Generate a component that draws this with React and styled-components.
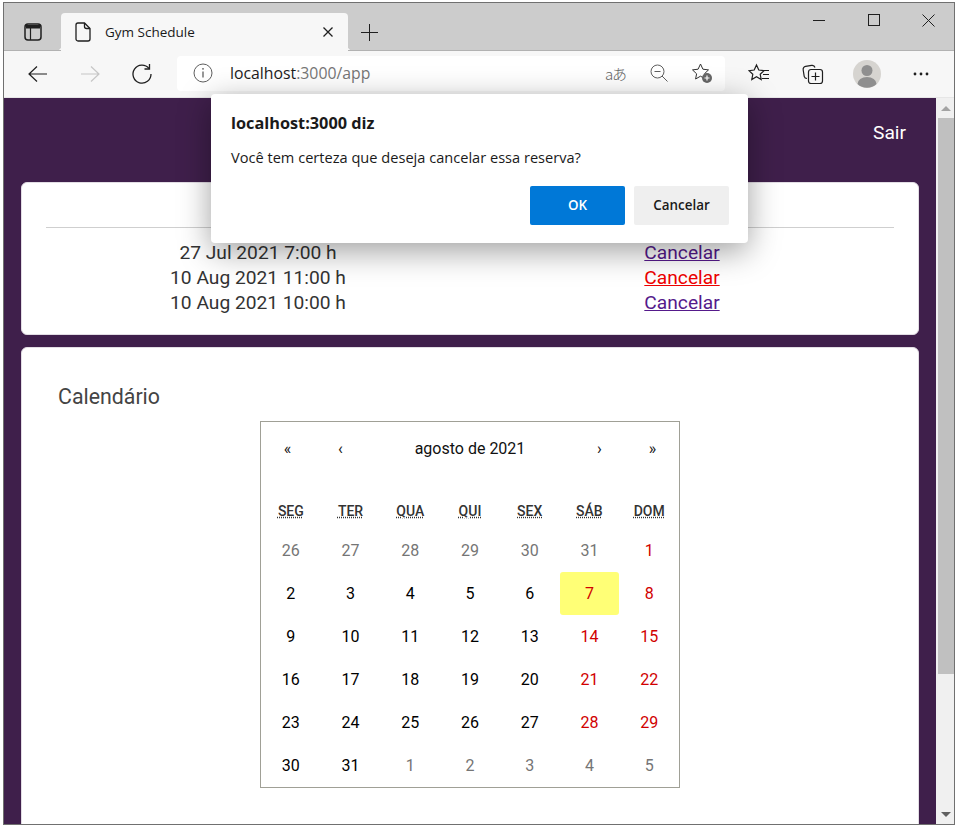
import styled, { createGlobalStyle } from "styled-components";

const GlobalStyle = createGlobalStyle`
  html, body {
    margin: 0;
    padding: 0;
    background: #fff;
    overflow: hidden;
  }
  * {
    box-sizing: border-box;
  }
`;

const UI_FONT = `"Open Sans", "Noto Sans", "Liberation Sans", sans-serif`;
const PAGE_FONT = `Roboto, "Liberation Sans", sans-serif`;

const Window = styled.div`
  position: relative;
  display: flex;
  flex-direction: column;
  width: 952px;
  height: 823px;
  margin: 2px 0 0 3px;
  border: 1px solid #707070;
  overflow: hidden;
  font-family: ${UI_FONT};
`;

const TabStrip = styled.div`
  display: flex;
  align-items: flex-start;
  flex: none;
  height: 48px;
  background: #cccccc;
  box-shadow: inset 0 -1px 0 #b2b2b2;
`;

const SideButton = styled.div`
  display: flex;
  align-items: center;
  justify-content: center;
  width: 57px;
  height: 38px;
  margin-top: 10px;
`;

const Tab = styled.div`
  position: relative;
  display: flex;
  align-items: center;
  width: 287px;
  height: 38px;
  margin-top: 10px;
  padding: 0 14px 0 14px;
  background: #f7f7f7;
  border-radius: 4px 4px 0 0;
  color: #1a1a1a;

  &::before,
  &::after {
    content: "";
    position: absolute;
    bottom: 1px;
    width: 4px;
    height: 4px;
  }
  &::before {
    left: -4px;
    background: radial-gradient(circle at 0 0, transparent 4px, #f7f7f7 4.5px);
  }
  &::after {
    right: -4px;
    background: radial-gradient(circle at 100% 0, transparent 4px, #f7f7f7 4.5px);
  }
`;

const TabTitle = styled.span`
  flex: 1;
  margin-left: 14px;
  font-size: 13.5px;
  line-height: 16px;
`;

const PlusButton = styled.div`
  display: flex;
  align-items: center;
  justify-content: center;
  width: 42px;
  height: 38px;
  margin-top: 10px;
`;

const Spacer = styled.div`
  flex: 1;
`;

const WinControls = styled.div`
  display: flex;
  margin-right: -2px;
`;

const WinButton = styled.div`
  display: flex;
  align-items: center;
  justify-content: center;
  width: 55px;
  height: 34px;
`;

const Toolbar = styled.div`
  display: flex;
  align-items: center;
  flex: none;
  height: 47px;
  padding: 0 0 0 8px;
  background: #f7f7f7;
  border-bottom: 1px solid #e6e6e6;
`;

const NavButton = styled.div`
  display: flex;
  align-items: center;
  justify-content: center;
  width: 52px;
  height: 35px;
`;

const AddressBar = styled.div`
  display: flex;
  align-items: center;
  width: 548px;
  height: 35px;
  margin: 0 7px 2px 9px;
  padding: 0 2px 0 16px;
  background: #fff;
  border-radius: 4px;
`;

const AddressText = styled.div`
  flex: 1;
  margin-left: 17px;
  font-size: 15.8px;
  color: #1c1c1c;

  span {
    color: #767676;
  }
`;

const AddressIcon = styled.div`
  display: flex;
  align-items: center;
  justify-content: center;
  width: 43px;
  height: 35px;
`;

const TranslateGlyph = styled.span`
  font-family: "Noto Sans CJK JP", sans-serif;
  font-size: 15px;
  font-weight: 300;
  letter-spacing: -1px;
  color: #666;
`;

const ToolIcon = styled.div`
  display: flex;
  align-items: center;
  justify-content: center;
  width: 54px;
  height: 35px;
`;

const Viewport = styled.div`
  display: flex;
  flex: 1;
  min-height: 0;
`;

const Page = styled.main`
  flex: 1;
  min-width: 0;
  padding: 0 17px;
  overflow: hidden;
  background: #3f1f4b;
  font-family: ${PAGE_FONT};
`;

const Header = styled.header`
  display: flex;
  align-items: center;
  justify-content: flex-end;
  height: 84px;
  padding: 0 13px 15px 0;
  color: #fff;
  font-size: 19.2px;
`;

const Card = styled.section`
  background: #fff;
  border-radius: 6px;
  border: 1px solid #e2dde4;
`;

const ReservationsCard = styled(Card)`
  height: 153px;
  margin-bottom: 12px;
  padding: 44px 24px 0;
`;

const Divider = styled.hr`
  height: 1px;
  margin: 0 0 12px;
  border: 0;
  background: #cfcfcf;
`;

const ReservationRow = styled.div`
  display: grid;
  grid-template-columns: 1fr 1fr;
  height: 25px;
  font-size: 19.2px;
  line-height: 25px;
  text-align: center;
  color: #333;
`;

const CancelLink = styled.a`
  color: ${(p) => (p.$active ? "#ee0000" : "#551a8b")};
  text-decoration: underline;
`;

const CalendarCard = styled(Card)`
  height: 600px;
  padding: 35px 36px 0;
`;

const CardTitle = styled.h2`
  margin: 0 0 10px;
  font-size: 21.33px;
  font-weight: 400;
  line-height: 28px;
  color: #444;
`;

const Calendar = styled.div`
  width: 420px;
  margin: 0 auto;
  border: 1px solid #a0a096;
  background: #fff;
`;

const CalendarNav = styled.div`
  display: flex;
  align-items: center;
  height: 54px;
  padding-bottom: 2px;
  color: #111;
`;

const NavArrow = styled.span`
  width: 53px;
  text-align: center;
  font-size: 16px;
`;

const NavLabel = styled.span`
  flex: 1;
  text-align: center;
  font-size: 16px;
`;

const Weekdays = styled.div`
  display: grid;
  grid-template-columns: repeat(7, 1fr);
  height: 53px;
  padding-top: 27px;
  text-align: center;
  font-size: 14px;
  font-weight: 500;
  line-height: 16px;
`;

const Weekday = styled.abbr`
  color: #333;
  text-decoration: underline dotted;
`;

const Days = styled.div`
  display: grid;
  grid-template-columns: repeat(7, 1fr);
  grid-auto-rows: 43px;
`;

const dayColors = {
  normal: "#000",
  weekend: "#d10000",
  outside: "#757575",
};

const Day = styled.div`
  display: flex;
  align-items: center;
  justify-content: center;
  font-size: 16px;
  border-radius: 3px;
  color: ${(p) => dayColors[p.$kind]};
  background: ${(p) => (p.$today ? "#ffff76" : "transparent")};
`;

const Scrollbar = styled.div`
  display: flex;
  flex-direction: column;
  flex: none;
  width: 18px;
  background: #f0f0f0;
`;

const ScrollArrow = styled.div`
  display: flex;
  align-items: center;
  justify-content: center;
  flex: none;
  height: ${(p) => (p.$down ? "19px" : "20px")};
  padding-left: 2px;

  &::before {
    content: "";
    border-left: 5px solid transparent;
    border-right: 5px solid transparent;
    ${(p) =>
      p.$down
        ? "border-top: 5px solid #606060;"
        : "border-bottom: 5px solid #a3a3a3;"}
  }
`;

const ScrollTrack = styled.div`
  flex: 1;
  padding-left: 2px;
`;

const ScrollThumb = styled.div`
  height: 556px;
  background: #c0c0c0;
`;

const Dialog = styled.div`
  position: absolute;
  top: 91px;
  left: 207px;
  display: flex;
  flex-direction: column;
  width: 537px;
  height: 149px;
  padding: 19px 19px 18px 20px;
  background: #fff;
  border-radius: 4px;
  box-shadow: 0 8px 32px rgba(0, 0, 0, 0.38);
  color: #1a1a1a;
`;

const DialogTitle = styled.div`
  font-size: 16.3px;
  font-weight: 700;
  line-height: 20px;
`;

const DialogMessage = styled.div`
  margin-top: 14px;
  font-size: 14.6px;
  line-height: 20px;
`;

const DialogActions = styled.div`
  display: flex;
  justify-content: flex-end;
  gap: 9px;
  margin-top: auto;
`;

const DialogButton = styled.button`
  width: 95px;
  height: 39px;
  padding: 0 0 2px;
  border: 0;
  border-radius: 2px;
  font-family: ${UI_FONT};
  font-size: 13.4px;
  font-weight: 600;
  background: ${(p) => (p.$primary ? "#0078d7" : "#efefef")};
  color: ${(p) => (p.$primary ? "#fff" : "#1a1a1a")};
`;

const Icon = ({ size = 20, w, h, children, stroke = "#1f1f1f" }) => (
  <svg
    width={w || size}
    height={h || size}
    viewBox={`0 0 ${w || size} ${h || size}`}
    fill="none"
    stroke={stroke}
    strokeWidth="1"
  >
    {children}
  </svg>
);

const reservations = [
  { date: "27 Jul 2021 7:00 h" },
  { date: "10 Aug 2021 11:00 h", active: true },
  { date: "10 Aug 2021 10:00 h" },
];

const weekdays = [
  ["SEG", "segunda-feira"],
  ["TER", "terça-feira"],
  ["QUA", "quarta-feira"],
  ["QUI", "quinta-feira"],
  ["SEX", "sexta-feira"],
  ["SÁB", "sábado"],
  ["DOM", "domingo"],
];

const buildDays = () => {
  const days = [];
  for (let d = 26; d <= 31; d++) days.push({ n: d, kind: "outside" });
  for (let d = 1; d <= 31; d++) {
    const col = days.length % 7;
    days.push({ n: d, kind: col >= 5 ? "weekend" : "normal", today: d === 7 });
  }
  for (let d = 1; d <= 5; d++) days.push({ n: d, kind: "outside" });
  return days;
};

const App = () => {
  return (
    <>
      <GlobalStyle />
      <Window>
        <TabStrip>
          <SideButton>
            <Icon size={18}>
              <rect x="1" y="1" width="16" height="16" rx="3" strokeWidth="1.5" />
              <path d="M2 2h14v3.5H2z" fill="#1f1f1f" stroke="none" />
              <path d="M6.5 5v12" strokeWidth="1.2" />
            </Icon>
          </SideButton>
          <Tab>
            <Icon w={16} h={20}>
              <path d="M1 3a2 2 0 0 1 2-2h6.5L15 6.5V17a2 2 0 0 1-2 2H3a2 2 0 0 1-2-2z" strokeWidth="1.3" />
              <path d="M9.5 1v3.5a2 2 0 0 0 2 2H15" strokeWidth="1.3" />
            </Icon>
            <TabTitle>Gym Schedule</TabTitle>
            <Icon size={12}>
              <path d="M1.5 1.5l9 9M10.5 1.5l-9 9" strokeWidth="1.3" />
            </Icon>
          </Tab>
          <PlusButton>
            <Icon size={17}>
              <path d="M8.5 0v17M0 8.5h17" />
            </Icon>
          </PlusButton>
          <Spacer />
          <WinControls>
            <WinButton>
              <Icon w={12} h={12}>
                <path d="M0 6.5h12" />
              </Icon>
            </WinButton>
            <WinButton>
              <Icon w={12} h={12}>
                <rect x="0.5" y="0.5" width="11" height="11" />
              </Icon>
            </WinButton>
            <WinButton>
              <Icon w={13} h={13}>
                <path d="M0.5 0.5l12 12M12.5 0.5l-12 12" />
              </Icon>
            </WinButton>
          </WinControls>
        </TabStrip>
        <Toolbar>
          <NavButton>
            <Icon w={22} h={18}>
              <path d="M20 9H2M10 1.5L2 9l8 7.5" strokeWidth="1.2" />
            </Icon>
          </NavButton>
          <NavButton>
            <Icon w={22} h={18} stroke="#c6c6c6">
              <path d="M2 9h18M12 1.5L20 9l-8 7.5" strokeWidth="1.2" />
            </Icon>
          </NavButton>
          <NavButton>
            <Icon size={22}>
              <path d="M18 5.5A9 9 0 1 0 20 11" strokeWidth="1.3" />
              <path d="M18.5 1v5h-5" strokeWidth="1.3" />
            </Icon>
          </NavButton>
          <AddressBar>
            <Icon size={20} stroke="#5f5f5f">
              <circle cx="10" cy="10" r="9" />
              <path d="M10 8.5v6" strokeWidth="1.3" />
              <circle cx="10" cy="5.8" r="0.9" fill="#5f5f5f" stroke="none" />
            </Icon>
            <AddressText>
              localhost<span>:3000/app</span>
            </AddressText>
            <AddressIcon>
              <TranslateGlyph>aあ</TranslateGlyph>
            </AddressIcon>
            <AddressIcon>
              <Icon size={18} stroke="#5f5f5f">
                <circle cx="7.5" cy="7.5" r="6.5" />
                <path d="M4.5 7.5h6M12 12l5.5 5.5" />
              </Icon>
            </AddressIcon>
            <AddressIcon>
              <Icon size={22} stroke="#333">
                <path d="M9.5 2l2.4 5.2 5.6.7-4.1 3.9 1 5.2-4.9-2.8-4.9 2.8 1-5.2L1.5 7.9l5.6-.7z" />
                <circle cx="16" cy="16" r="5" fill="#666" stroke="none" />
                <path d="M16 13.5v5M13.5 16h5" stroke="#fff" strokeWidth="1.2" />
              </Icon>
            </AddressIcon>
          </AddressBar>
          <ToolIcon>
            <Icon size={22}>
              <path d="M8.5 2l2.3 5 5.2.7-3.8 3.6 1 5.2-4.7-2.7-4.7 2.7 1-5.2L1 7.7 6.2 7z" strokeWidth="1.2" />
              <path d="M14 7.5h7M15 11.5h6M14 15.5h7" strokeWidth="1.2" />
            </Icon>
          </ToolIcon>
          <ToolIcon>
            <Icon size={22}>
              <path d="M5 15.5a3 3 0 0 1-2.8-2.2L1.2 7A3 3 0 0 1 3.6 3.4l6-1a3 3 0 0 1 3.4 2.1" strokeWidth="1.2" />
              <rect x="6.5" y="6.5" width="14" height="14" rx="2.5" strokeWidth="1.2" />
              <path d="M13.5 9.5v8M9.5 13.5h8" strokeWidth="1.2" />
            </Icon>
          </ToolIcon>
          <ToolIcon>
            <svg width="28" height="28" viewBox="0 0 28 28">
              <circle cx="14" cy="14" r="14" fill="#d6d4d0" />
              <circle cx="14" cy="10.5" r="5.5" fill="#8f8f8f" />
              <path d="M4.5 24a9.5 7 0 0 1 19 0 14 14 0 0 1-19 0z" fill="#8f8f8f" />
            </svg>
          </ToolIcon>
          <ToolIcon>
            <svg width="16" height="4" viewBox="0 0 16 4" fill="#1f1f1f">
              <circle cx="2" cy="2" r="1.4" />
              <circle cx="8" cy="2" r="1.4" />
              <circle cx="14" cy="2" r="1.4" />
            </svg>
          </ToolIcon>
        </Toolbar>
        <Viewport>
          <Page>
            <Header>Sair</Header>
            <ReservationsCard>
              <Divider />
              {reservations.map((r) => (
                <ReservationRow key={r.date}>
                  <span>{r.date}</span>
                  <span>
                    <CancelLink href="#" $active={r.active}>
                      Cancelar
                    </CancelLink>
                  </span>
                </ReservationRow>
              ))}
            </ReservationsCard>
            <CalendarCard>
              <CardTitle>Calendário</CardTitle>
              <Calendar>
                <CalendarNav>
                  <NavArrow>«</NavArrow>
                  <NavArrow>‹</NavArrow>
                  <NavLabel>agosto de 2021</NavLabel>
                  <NavArrow>›</NavArrow>
                  <NavArrow>»</NavArrow>
                </CalendarNav>
                <Weekdays>
                  {weekdays.map(([short, full]) => (
                    <div key={short}>
                      <Weekday title={full}>{short}</Weekday>
                    </div>
                  ))}
                </Weekdays>
                <Days>
                  {buildDays().map((d, i) => (
                    <Day key={i} $kind={d.kind} $today={d.today}>
                      {d.n}
                    </Day>
                  ))}
                </Days>
              </Calendar>
            </CalendarCard>
          </Page>
          <Scrollbar>
            <ScrollArrow />
            <ScrollTrack>
              <ScrollThumb />
            </ScrollTrack>
            <ScrollArrow $down />
          </Scrollbar>
        </Viewport>
        <Dialog>
          <DialogTitle>localhost:3000 diz</DialogTitle>
          <DialogMessage>Você tem certeza que deseja cancelar essa reserva?</DialogMessage>
          <DialogActions>
            <DialogButton $primary>OK</DialogButton>
            <DialogButton>Cancelar</DialogButton>
          </DialogActions>
        </Dialog>
      </Window>
    </>
  );
};

export default App;
